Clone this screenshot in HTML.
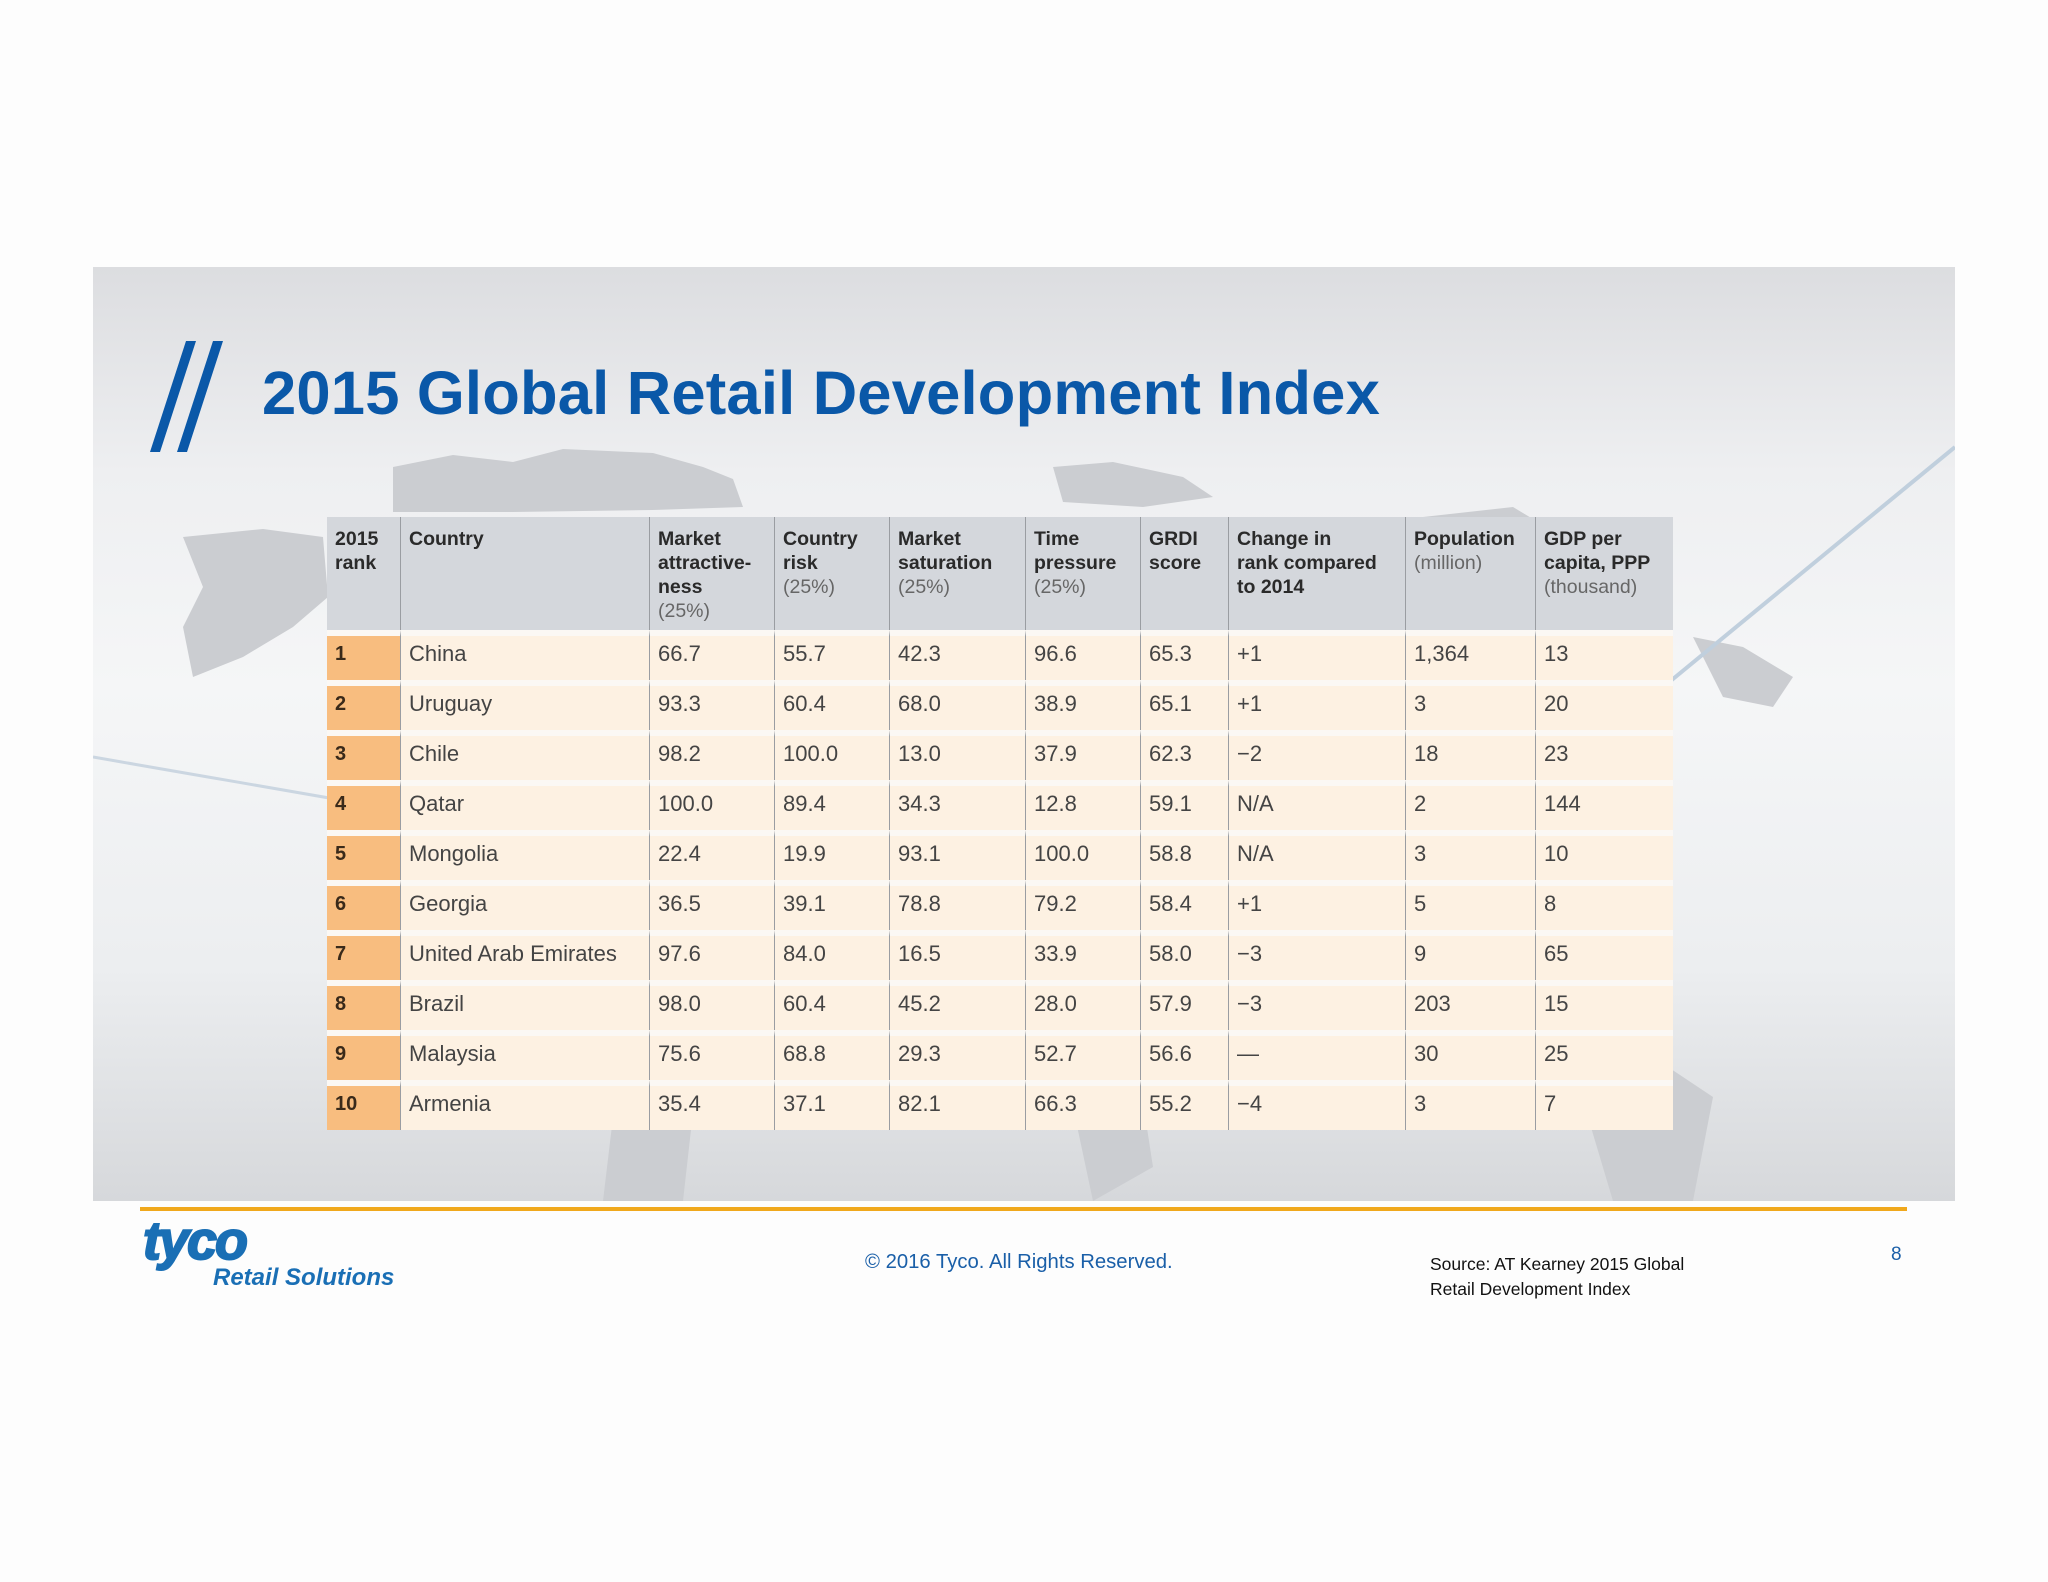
<!DOCTYPE html>
<html><head><meta charset="utf-8"><style>
*{margin:0;padding:0;box-sizing:border-box}
body{width:2048px;height:1582px;background:#fdfdfd;position:relative;overflow:hidden;font-family:"Liberation Sans",sans-serif}
#panel{position:absolute;left:93px;top:267px;width:1862px;height:934px;background:linear-gradient(180deg,#dcdde0 0%,#eeeff1 22%,#f5f6f7 45%,#eceef0 75%,#d6d8db 100%);overflow:hidden}
#title{position:absolute;left:262px;top:358px;font-size:61.5px;font-weight:bold;color:#0a58a8;letter-spacing:0.2px}
table{position:absolute;left:327px;top:517px;border-collapse:separate;border-spacing:0;font-size:22px;color:#444;table-layout:fixed}
th{background:#d4d7dc;text-align:left;vertical-align:top;font-size:19.5px;line-height:24px;color:#2a2a2a;padding:10px 8px 0;height:113px;border-left:1px solid #9a9da2;font-weight:bold}
th span{font-weight:normal;color:#666}
td{background:#fdf1e2;height:50px;padding:0 8px 8px;border-left:1px solid #9a9da2;border-top:6px solid #fbf8f4;vertical-align:middle;font-weight:300}
td.r{background:#f8bd7f;font-weight:bold;color:#3a2a1a;border-left:none;font-size:20px}
th.r{border-left:none}
#line{position:absolute;left:140px;top:1207px;width:1767px;height:4px;background:#f0a81c}
</style></head><body>
<div id="panel">
<svg width="1862" height="934" style="position:absolute;left:0;top:0">
<g fill="#cbcdd1">
<path d="M300 200 L360 188 L420 195 L470 182 L560 186 L610 200 L640 212 L650 240 L560 243 L420 245 L300 245 Z"/>
<path d="M90 270 L170 262 L230 270 L235 330 L200 360 L150 390 L100 410 L90 360 L110 320 Z"/>
<path d="M960 200 L1020 195 L1090 210 L1120 230 L1050 240 L970 235 Z"/>
<path d="M1330 250 L1420 240 L1470 270 L1510 300 L1500 350 L1460 340 L1420 330 L1380 320 Z"/>
<path d="M1600 370 L1650 380 L1700 410 L1680 440 L1630 430 Z"/>
<path d="M520 850 L600 845 L590 934 L510 934 Z"/>
<path d="M980 840 L1050 835 L1060 900 L1000 934 Z"/>
<path d="M1480 800 L1560 790 L1620 830 L1600 934 L1520 934 Z"/>
</g>
<path d="M1862 180 L1400 560" stroke="#c0cfdd" stroke-width="4" fill="none"/>
<path d="M0 490 C400 560 900 640 1400 780" stroke="#cbd6e1" stroke-width="3" fill="none"/>
</svg>
<svg width="100" height="120" style="position:absolute;left:50px;top:70px">
<path d="M43 4 L53 4 L17 115 L7 115 Z" fill="#0a58a8"/>
<path d="M70 4 L80 4 L44 115 L34 115 Z" fill="#0a58a8"/>
</svg>
</div>
<div id="title">2015 Global Retail Development Index</div>
<table>
<colgroup><col style="width:73px"><col style="width:249px"><col style="width:125px"><col style="width:115px"><col style="width:136px"><col style="width:115px"><col style="width:88px"><col style="width:177px"><col style="width:130px"><col style="width:138px"></colgroup>
<tr><th class="r">2015<br>rank</th><th>Country</th><th>Market<br>attractive-<br>ness<br><span>(25%)</span></th><th>Country<br>risk<br><span>(25%)</span></th><th>Market<br>saturation<br><span>(25%)</span></th><th>Time<br>pressure<br><span>(25%)</span></th><th>GRDI<br>score</th><th>Change in<br>rank compared<br>to 2014</th><th>Population<br><span>(million)</span></th><th>GDP per<br>capita, PPP<br><span>(thousand)</span></th></tr>
<tr><td class="r">1</td><td>China</td><td>66.7</td><td>55.7</td><td>42.3</td><td>96.6</td><td>65.3</td><td>+1</td><td>1,364</td><td>13</td></tr>
<tr><td class="r">2</td><td>Uruguay</td><td>93.3</td><td>60.4</td><td>68.0</td><td>38.9</td><td>65.1</td><td>+1</td><td>3</td><td>20</td></tr>
<tr><td class="r">3</td><td>Chile</td><td>98.2</td><td>100.0</td><td>13.0</td><td>37.9</td><td>62.3</td><td>−2</td><td>18</td><td>23</td></tr>
<tr><td class="r">4</td><td>Qatar</td><td>100.0</td><td>89.4</td><td>34.3</td><td>12.8</td><td>59.1</td><td>N/A</td><td>2</td><td>144</td></tr>
<tr><td class="r">5</td><td>Mongolia</td><td>22.4</td><td>19.9</td><td>93.1</td><td>100.0</td><td>58.8</td><td>N/A</td><td>3</td><td>10</td></tr>
<tr><td class="r">6</td><td>Georgia</td><td>36.5</td><td>39.1</td><td>78.8</td><td>79.2</td><td>58.4</td><td>+1</td><td>5</td><td>8</td></tr>
<tr><td class="r">7</td><td>United Arab Emirates</td><td>97.6</td><td>84.0</td><td>16.5</td><td>33.9</td><td>58.0</td><td>−3</td><td>9</td><td>65</td></tr>
<tr><td class="r">8</td><td>Brazil</td><td>98.0</td><td>60.4</td><td>45.2</td><td>28.0</td><td>57.9</td><td>−3</td><td>203</td><td>15</td></tr>
<tr><td class="r">9</td><td>Malaysia</td><td>75.6</td><td>68.8</td><td>29.3</td><td>52.7</td><td>56.6</td><td>—</td><td>30</td><td>25</td></tr>
<tr><td class="r">10</td><td>Armenia</td><td>35.4</td><td>37.1</td><td>82.1</td><td>66.3</td><td>55.2</td><td>−4</td><td>3</td><td>7</td></tr>
</table>
<div id="line"></div>
<div style="position:absolute;left:143px;top:1210px;font-size:54px;font-weight:900;font-style:italic;color:#1a6fb5;letter-spacing:-2px;-webkit-text-stroke:2px #1a6fb5">tyco</div>
<div style="position:absolute;left:213px;top:1264px;font-size:24px;font-weight:bold;font-style:italic;color:#1a6fb5">Retail Solutions</div>
<div style="position:absolute;left:865px;top:1251px;font-size:20.3px;color:#1a5fa8">© 2016 Tyco. All Rights Reserved.</div>
<div style="position:absolute;left:1430px;top:1252px;font-size:17.5px;line-height:25px;color:#111">Source: AT Kearney 2015 Global<br>Retail Development Index</div>
<div style="position:absolute;left:1891px;top:1244px;font-size:19px;color:#1a5fa8">8</div>
</body></html>
